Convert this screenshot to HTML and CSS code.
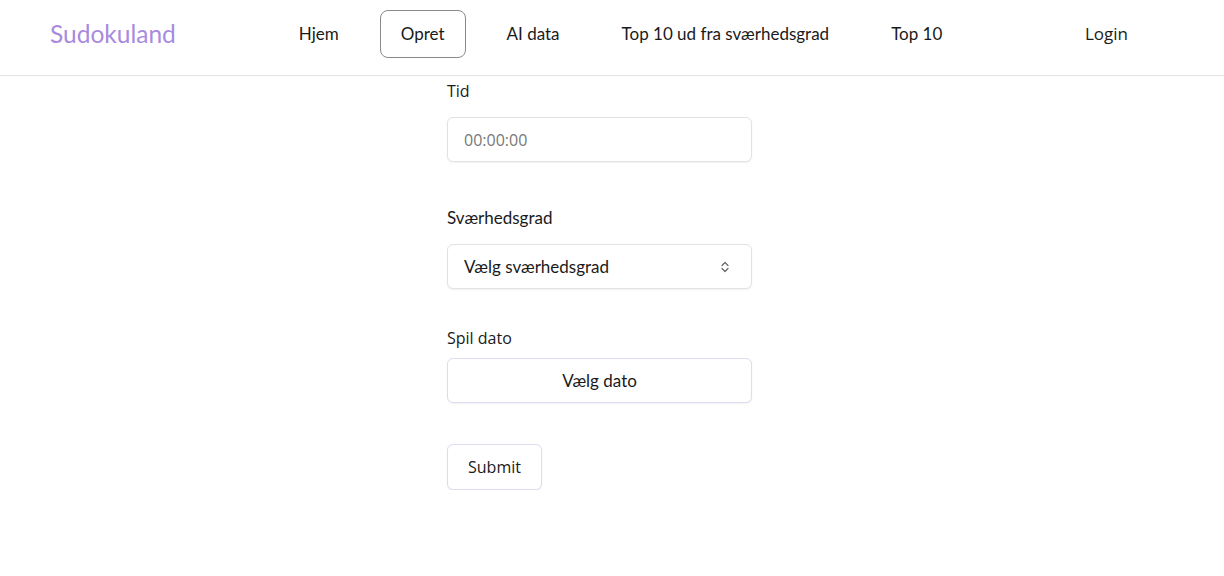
FILE: index.html
```html
<!DOCTYPE html>
<html lang="da">
<head>
  <meta charset="UTF-8">
  <meta name="viewport" content="width=device-width, initial-scale=1.0">
  <title>Sudokuland - Opret</title>
  <link rel="stylesheet" href="styles.css">
</head>
<body>
  <header class="topbar">
    <a class="logo" href="#">Sudokuland</a>
    <nav class="nav">
      <a class="nav-item" href="#">Hjem</a>
      <a class="nav-item active" href="#">Opret</a>
      <a class="nav-item" href="#">AI data</a>
      <a class="nav-item" href="#">Top 10 ud fra sværhedsgrad</a>
      <a class="nav-item" href="#">Top 10</a>
    </nav>
    <a class="login" href="#">Login</a>
  </header>

  <main class="form-wrap">
    <form class="create-form">
      <label class="field-label label-tid" for="tid">Tid</label>
      <input class="field time-input" id="tid" type="text" placeholder="00:00:00">

      <label class="field-label label-grad" for="grad">Sværhedsgrad</label>
      <div class="field select-field" id="grad">
        <span>Vælg sværhedsgrad</span>
        <svg class="chevrons" width="10" height="14" viewBox="0 0 10 14">
          <path d="M2 5.5 L5 2.5 L8 5.5 M2 8.5 L5 11.5 L8 8.5" fill="none" stroke="#666" stroke-width="1.2" stroke-linecap="round" stroke-linejoin="round"/>
        </svg>
      </div>

      <label class="field-label label-dato">Spil dato</label>
      <button type="button" class="field date-btn">Vælg dato</button>

      <button type="button" class="submit-btn">Submit</button>
    </form>
  </main>
</body>
</html>
```

FILE: styles.css
```css
body {
  margin: 0;
  font-family: "Lato", "Noto Sans", sans-serif;
  color: #1a1a1a;
  background: #fff;
}
a {
  text-decoration: none;
  color: inherit;
}
.topbar {
  display: flex;
  align-items: center;
  height: 75px;
  padding: 0 50px;
  border-bottom: 1px solid #e3e3e3;
}
.logo {
  font-family: "Lato", sans-serif;
  font-size: 24.5px;
  color: #a88be0;
  margin-top: -8px;
}
.nav {
  display: flex;
  align-items: center;
  gap: 20px;
  margin-left: 102px;
  margin-top: -8px;
}
.nav-item {
  font-size: 17px;
  padding: 13px 20px;
  border: 1px solid transparent;
  border-radius: 8px;
  line-height: 20px;
}
.nav-item.active {
  border-color: #8a8a8a;
}
.login {
  margin-left: auto;
  margin-right: 46px;
  margin-top: -8px;
  font-family: "Open Sans", sans-serif;
  font-size: 17px;
}
.form-wrap {
  width: 330px;
  margin: 0 auto;
}
.create-form {
  display: flex;
  flex-direction: column;
  align-items: flex-start;
}
.field-label {
  font-size: 16px;
  line-height: 24px;
}
.label-tid {
  font-family: "Open Sans", sans-serif;
  margin-top: 3px;
}
.label-grad {
  font-size: 17px;
  margin-top: 44px;
}
.label-dato {
  font-family: "Open Sans", sans-serif;
  margin-top: 37px;
}
.field {
  box-sizing: border-box;
  width: 305px;
  height: 45px;
  border: 1px solid #e2e2e2;
  border-radius: 6px;
  background: #fff;
  box-shadow: 0 1px 2px rgba(0, 0, 0, 0.06);
  font-size: 17px;
}
.time-input {
  margin-top: 14px;
  padding: 0 16px;
  font-family: "Open Sans", sans-serif;
  font-size: 16px;
  color: #333;
  outline: none;
}
.time-input::placeholder {
  color: #777;
}
.select-field {
  margin-top: 14px;
  display: flex;
  align-items: center;
  justify-content: space-between;
  padding: 0 21px 0 16px;
  font-family: "Lato", sans-serif;
}
.date-btn {
  margin-top: 8px;
  border-color: #dcdcf2;
  font-family: "Lato", sans-serif;
  color: #1a1a1a;
  cursor: pointer;
}
.submit-btn {
  margin-top: 41px;
  width: 95px;
  height: 46px;
  border: 1px solid #dcdcf2;
  border-radius: 6px;
  background: #fff;
  box-shadow: 0 1px 2px rgba(0, 0, 0, 0.06);
  font-family: "Open Sans", sans-serif;
  font-size: 16px;
  color: #1a1a1a;
  cursor: pointer;
}
```
